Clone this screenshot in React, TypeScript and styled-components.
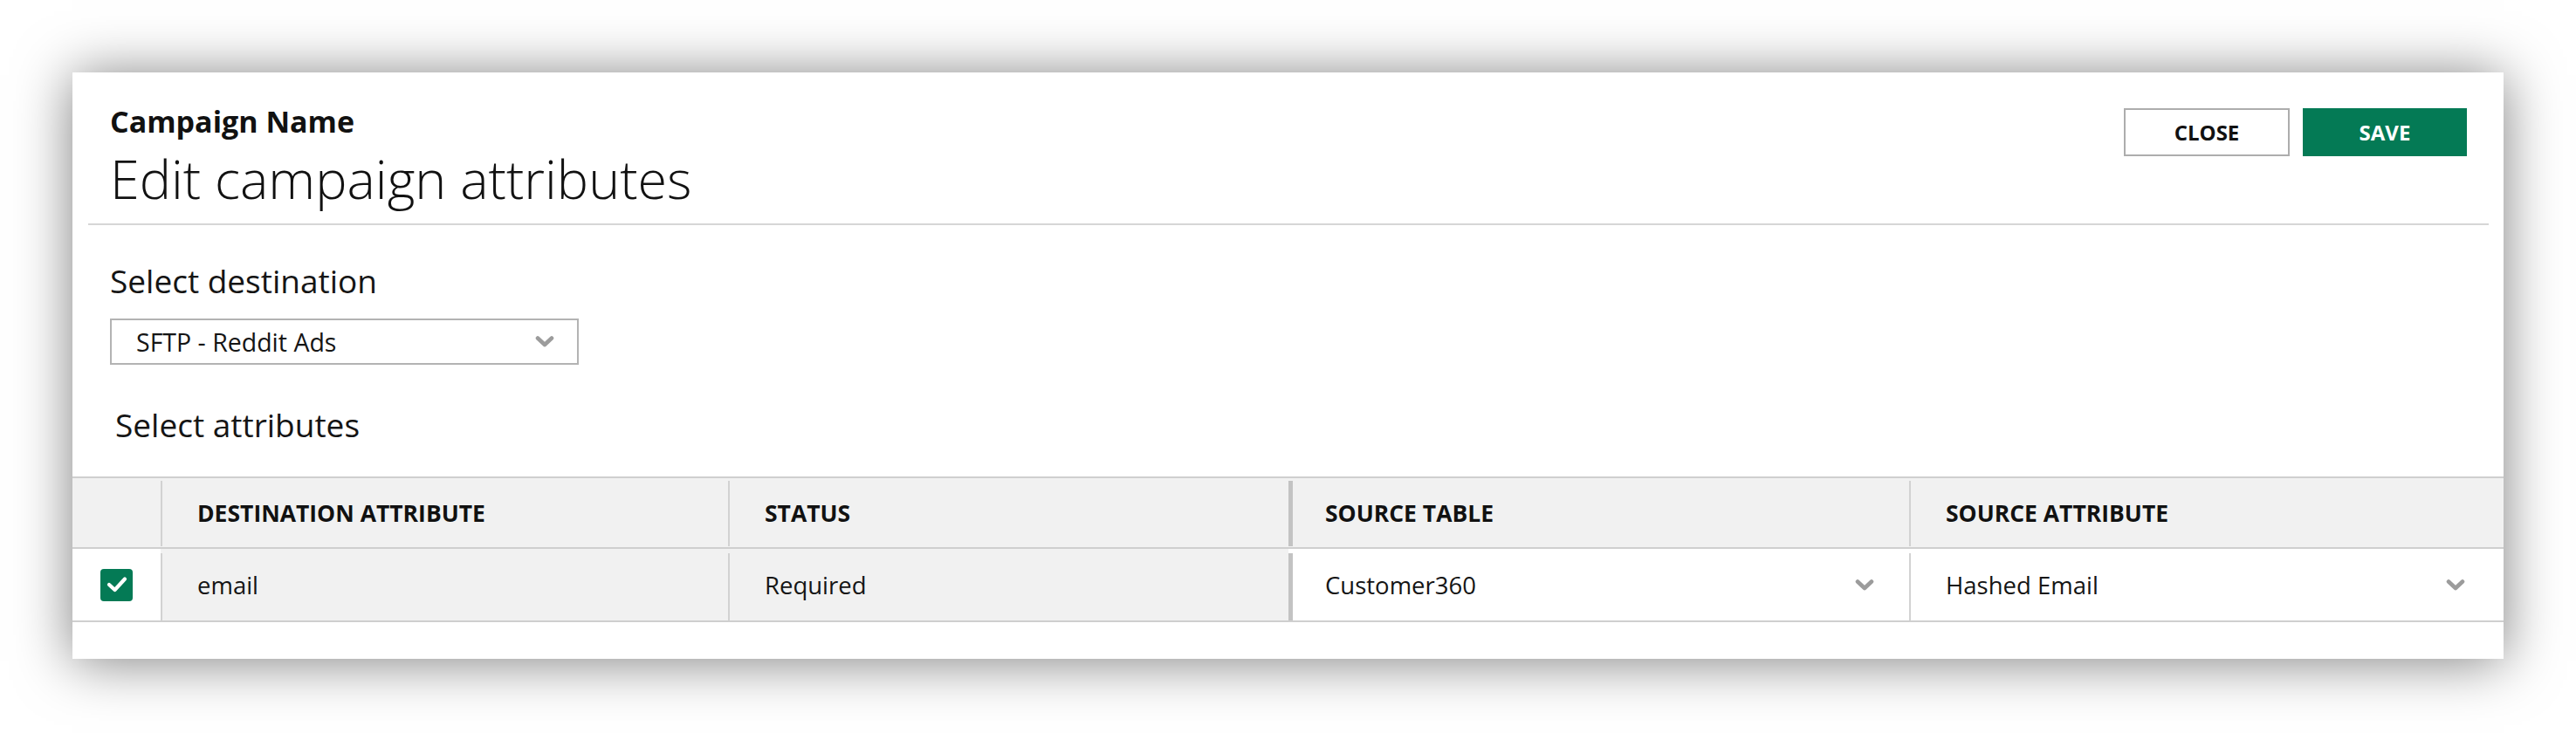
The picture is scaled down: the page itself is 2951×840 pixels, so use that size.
import React from 'react'
import styled, { createGlobalStyle } from 'styled-components'

const GlobalStyle = createGlobalStyle`
  html, body {
    margin: 0;
    background: #fff;
  }
  body {
    font-family: "Open Sans", "Liberation Sans", sans-serif;
    color: #151515;
  }
`

const GREEN = '#047a55'

type Divider = 'none' | 'thin' | 'thick'

const columns = [
  { key: 'check', label: '', divider: 'none' as Divider },
  { key: 'dest', label: 'DESTINATION ATTRIBUTE', divider: 'thin' as Divider },
  { key: 'status', label: 'STATUS', divider: 'thin' as Divider },
  { key: 'table', label: 'SOURCE TABLE', divider: 'thick' as Divider },
  { key: 'attr', label: 'SOURCE ATTRIBUTE', divider: 'thin' as Divider },
]

const App = () => {
  return (
    <>
      <GlobalStyle />
      <Page>
        <Modal>
          <Header>
            <TitleBlock>
              <CampaignName>Campaign Name</CampaignName>
              <Title>Edit campaign attributes</Title>
            </TitleBlock>
            <Actions>
              <Button>CLOSE</Button>
              <Button $primary>SAVE</Button>
            </Actions>
          </Header>

          <Body>
            <Label>Select destination</Label>
            <Select>
              <span>SFTP - Reddit Ads</span>
              <Chevron />
            </Select>
            <Label $indent={6} $top={47}>Select attributes</Label>
          </Body>

          <Table>
            <Row $header>
              {columns.map((c) => (
                <HeadCell key={c.key} $divider={c.divider}>{c.label}</HeadCell>
              ))}
            </Row>
            <Row>
              <Cell $divider="none" $center>
                <Checkbox>
                  <svg width="24" height="20" viewBox="0 0 24 20">
                    <polyline points="3,10 9.5,16 21,3.5" fill="none" stroke="#fff" strokeWidth="4.2" strokeLinecap="round" strokeLinejoin="round" />
                  </svg>
                </Checkbox>
              </Cell>
              <Cell $divider="thin" $shade>email</Cell>
              <Cell $divider="thin" $shade>Required</Cell>
              <Cell $divider="thick" $right={40}>
                <span>Customer360</span>
                <Chevron />
              </Cell>
              <Cell $divider="thin" $right={44}>
                <span>Hashed Email</span>
                <Chevron />
              </Cell>
            </Row>
          </Table>
        </Modal>
      </Page>
    </>
  )
}

const Chevron = () => (
  <svg width="22" height="15" viewBox="0 0 22 15">
    <polyline points="3,3.5 11,11 19,3.5" fill="none" stroke="#9c9c9c" strokeWidth="4.6" strokeLinecap="round" strokeLinejoin="round" />
  </svg>
)

const Page = styled.div`
  padding: 83px 83px 85px;
`

const Modal = styled.div`
  background: #fff;
  box-shadow: 0 3px 60px rgba(0, 0, 0, 0.5);
  padding-bottom: 42px;
`

const Header = styled.header`
  margin: 0 17px 0 18px;
  padding: 37px 25px 16px;
  border-bottom: 2px solid #d6d6d6;
  display: flex;
  justify-content: space-between;
  align-items: flex-start;
`

const TitleBlock = styled.div`
  display: flex;
  flex-direction: column;
  gap: 12px;
`

const CampaignName = styled.div`
  font-size: 34px;
  line-height: 38px;
  font-weight: 700;
  color: #111;
`

const Title = styled.h1`
  margin: 0;
  font-size: 61px;
  line-height: 70px;
  font-weight: 300;
  color: #111;
`

const Actions = styled.div`
  display: flex;
  gap: 15px;
  margin-top: 4px;
`

const Button = styled.button<{ $primary?: boolean }>`
  box-sizing: border-box;
  width: ${(p) => (p.$primary ? 188 : 190)}px;
  height: 55px;
  border: 2px solid ${(p) => (p.$primary ? GREEN : '#adadad')};
  background: ${(p) => (p.$primary ? GREEN : '#fff')};
  color: ${(p) => (p.$primary ? '#fff' : '#111')};
  font-family: inherit;
  font-size: 24px;
  font-weight: 700;
  padding: 0;
  cursor: pointer;
`

const Body = styled.div`
  padding: 42px 0 0 43px;
`

const Label = styled.div<{ $indent?: number; $top?: number }>`
  font-size: 37px;
  line-height: 44px;
  color: #151515;
  padding-left: ${(p) => p.$indent ?? 0}px;
  margin-top: ${(p) => p.$top ?? 0}px;
`

const Select = styled.div`
  box-sizing: border-box;
  margin-top: 21px;
  width: 537px;
  height: 53px;
  border: 2px solid #b3b3b3;
  padding: 0 26px 0 28px;
  display: flex;
  align-items: center;
  justify-content: space-between;
  font-size: 28.5px;
  color: #151515;
`

const Table = styled.div`
  margin-top: 37px;
  border-top: 2px solid #cfcfcf;
`

const Row = styled.div<{ $header?: boolean }>`
  display: grid;
  grid-template-columns: 101px 650px 642px 711px 1fr;
  height: ${(p) => (p.$header ? 79 : 82)}px;
  background: ${(p) => (p.$header ? '#f1f1f1' : '#fff')};
  border-bottom: 2px solid #cfcfcf;
`

const BaseCell = styled.div<{ $divider: Divider }>`
  position: relative;
  display: flex;
  align-items: center;
  padding-left: 42px;

  &::before {
    content: '';
    display: ${(p) => (p.$divider === 'none' ? 'none' : 'block')};
    position: absolute;
    left: 0;
    width: ${(p) => (p.$divider === 'thick' ? 5 : 2)}px;
    background: ${(p) => (p.$divider === 'thick' ? '#c3c3c3' : '#d2d2d2')};
  }
`

const HeadCell = styled(BaseCell)`
  font-size: 26.5px;
  font-weight: 700;
  color: #111;

  &::before {
    top: 3px;
    bottom: 1px;
  }
`

const Cell = styled(BaseCell)<{ $shade?: boolean; $center?: boolean; $right?: number }>`
  font-size: 27.5px;
  color: #151515;
  background: ${(p) => (p.$shade ? '#f1f1f1' : '#fff')};
  justify-content: ${(p) => (p.$center ? 'center' : p.$right ? 'space-between' : 'flex-start')};
  padding-left: ${(p) => (p.$center ? 0 : 42)}px;
  padding-right: ${(p) => p.$right ?? 0}px;

  &::before {
    top: 5px;
    bottom: 0;
  }
`

const Checkbox = styled.div`
  width: 37px;
  height: 37px;
  border-radius: 4px;
  background: ${GREEN};
  display: flex;
  align-items: center;
  justify-content: center;
`

export default App
